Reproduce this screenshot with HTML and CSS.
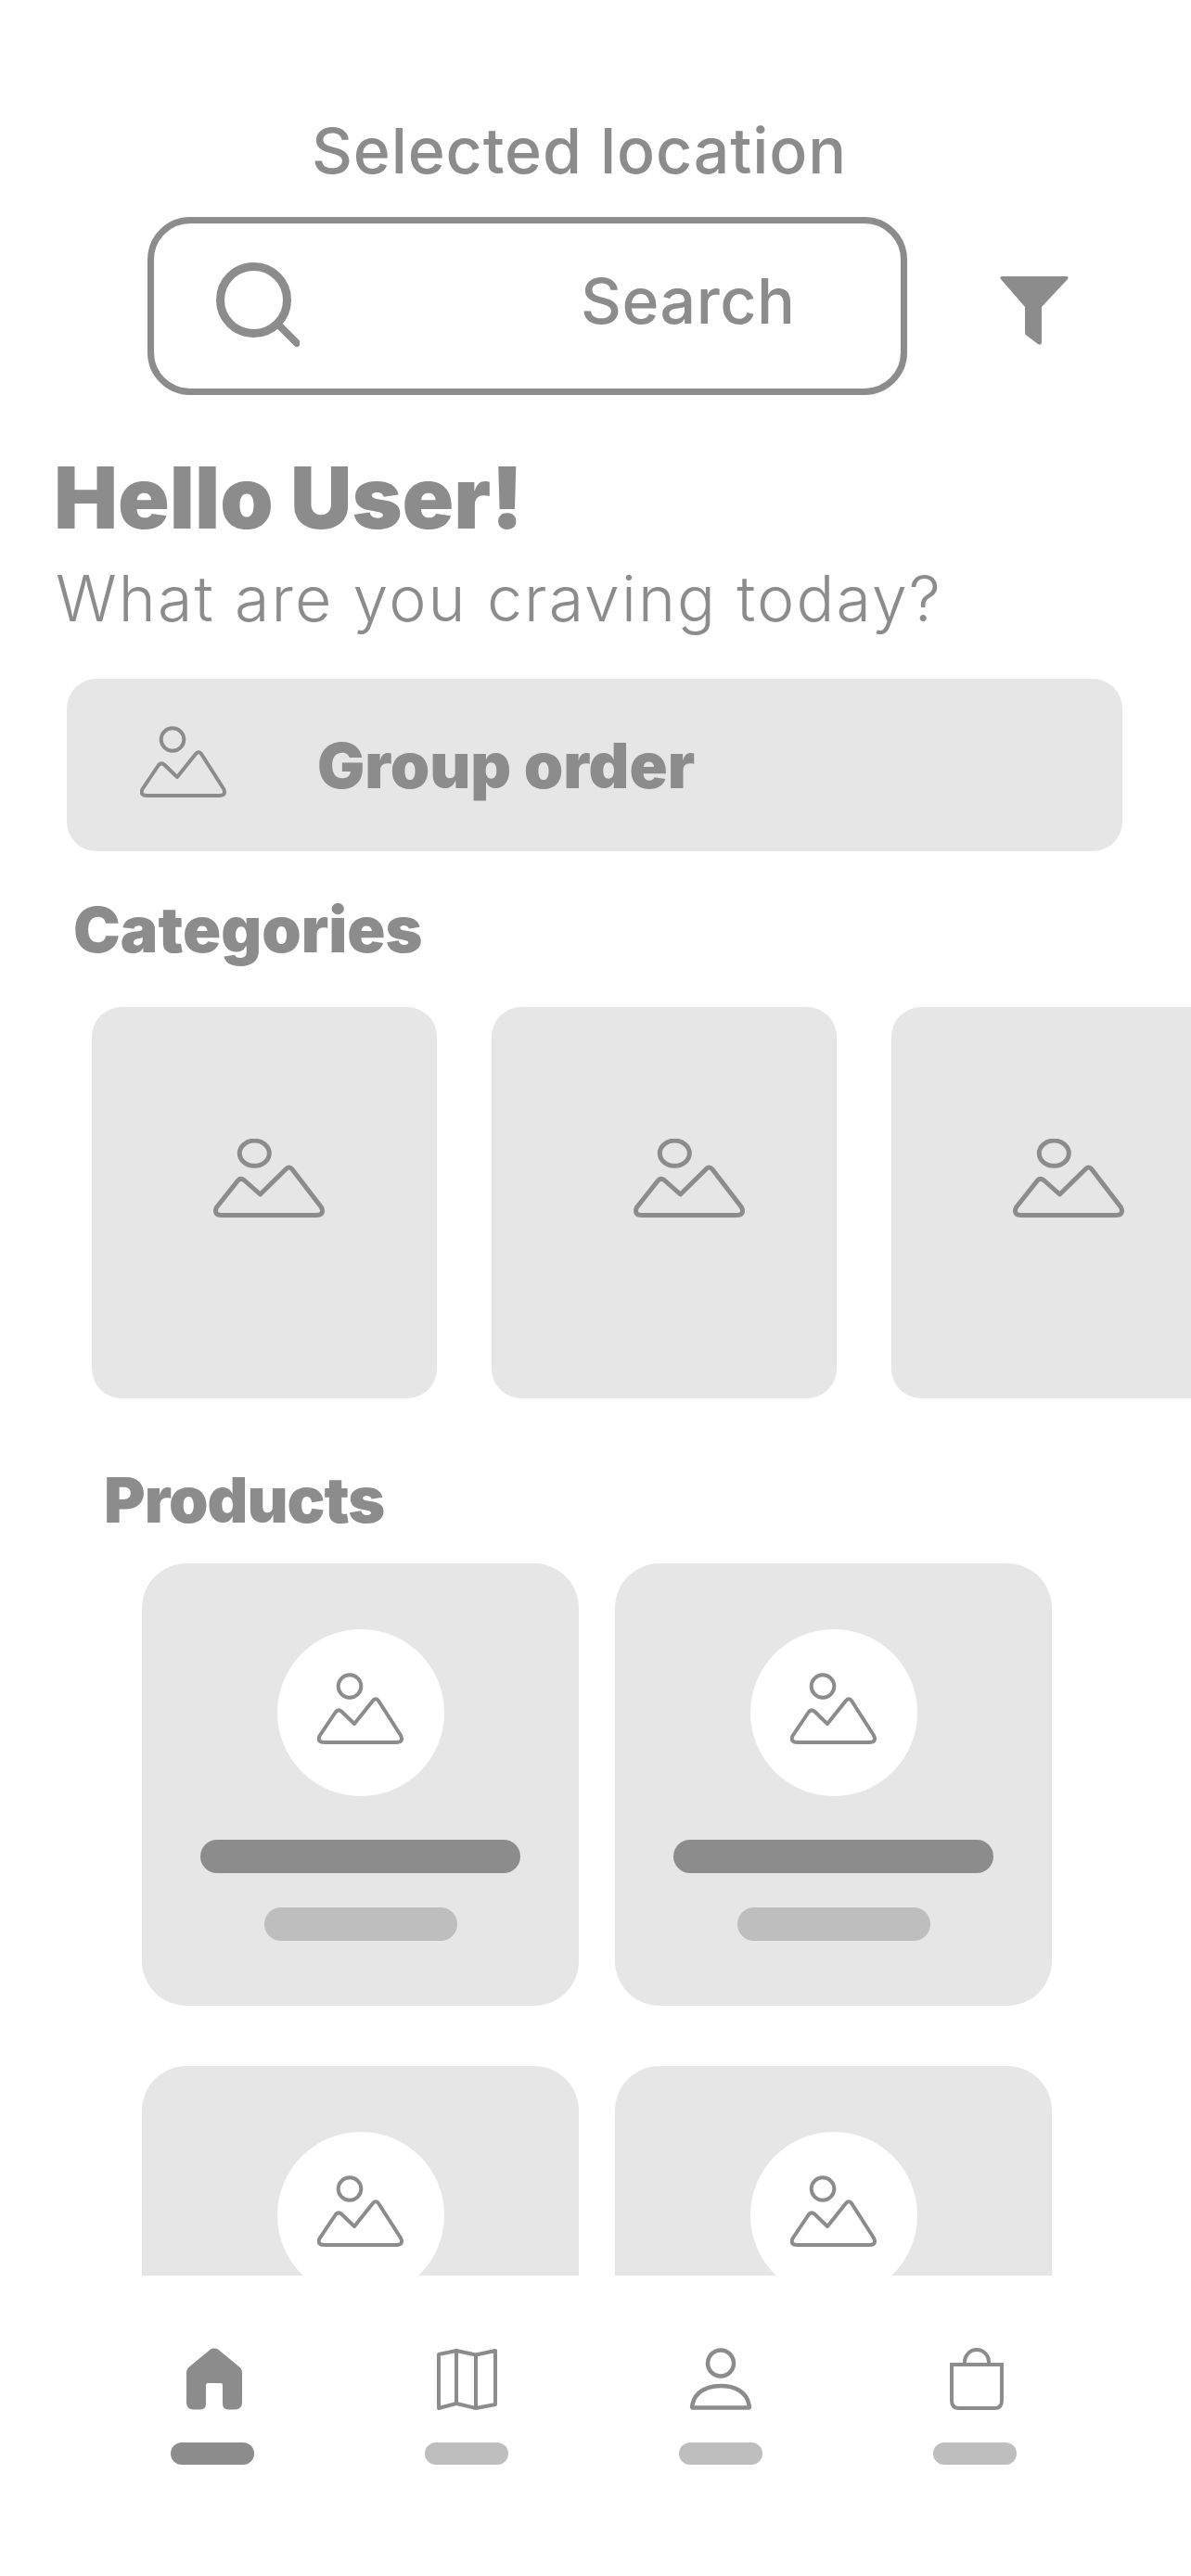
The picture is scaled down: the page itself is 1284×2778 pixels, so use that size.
FILE: index.html
```html
<!DOCTYPE html>
<html lang="en">
<head>
<meta charset="utf-8">
<title>Home</title>
<link rel="stylesheet" href="styles.css">
</head>
<body>
<svg class="defs" width="0" height="0" aria-hidden="true">
  <symbol id="img-small" viewBox="0 0 93 77">
    <circle cx="35" cy="14.5" r="12.3" fill="none" stroke="#8c8c8c" stroke-width="4"/>
    <path d="M8 75H85Q93.5 75 90 67.5L66 30Q63 26.5 60 30L40 55 26 41.5Q23 39 20 42L2.5 68Q-.5 75 8 75Z" fill="none" stroke="#8c8c8c" stroke-width="4" stroke-linejoin="round"/>
  </symbol>
  <symbol id="img-large" viewBox="0 0 120 85">
    <ellipse cx="44.3" cy="15.7" rx="16" ry="13.6" fill="none" stroke="#8c8c8c" stroke-width="5"/>
    <path d="M9 82.500H111Q120 82.500 116.500 74L85 33Q81.500 29 78 33L50.500 60 33 44.500Q29.500 42 26.500 45L3.500 74Q0 82.500 9 82.500Z" fill="none" stroke="#8c8c8c" stroke-width="5" stroke-linejoin="round"/>
  </symbol>
</svg>
<div class="page">
  <main class="content">
    <div class="location">Selected location</div>
    <div class="search-row">
      <div class="search">
        <svg class="search-icon" width="90" height="92" viewBox="0 0 90 92"><circle cx="40.500" cy="40.500" r="36" fill="none" stroke="#8c8c8c" stroke-width="9"/><path d="M67 67 87 87" fill="none" stroke="#8c8c8c" stroke-width="8" stroke-linecap="round"/></svg>
        <span class="search-text">Search</span>
      </div>
      <svg class="filter" width="76" height="76" viewBox="0 0 76 76"><path d="M4 1H72Q76 1 74 4L46 34V72Q46 76 42 74L30 65Q28 64 28 61V34L2 4Q0 1 4 1Z" fill="#8c8c8c"/></svg>
    </div>
    <h1 class="hello">Hello User!</h1>
    <p class="sub">What are you craving today?</p>
    <div class="group-card">
      <svg class="img-small" width="93" height="77"><use href="#img-small"/></svg>
      <span class="group-text">Group order</span>
    </div>
    <h2 class="cat-title">Categories</h2>
    <div class="cat-row">
      <div class="cat"><svg width="120" height="85"><use href="#img-large"/></svg></div>
      <div class="cat cat-mid"><svg width="120" height="85"><use href="#img-large"/></svg></div>
      <div class="cat"><svg width="120" height="85"><use href="#img-large"/></svg></div>
    </div>
    <h2 class="prod-title">Products</h2>
    <div class="prod-grid">
      <div class="prod">
        <div class="prod-pic"><svg width="93" height="77"><use href="#img-small"/></svg></div>
        <div class="bar-name"></div>
        <div class="bar-price"></div>
      </div>
      <div class="prod">
        <div class="prod-pic"><svg width="93" height="77"><use href="#img-small"/></svg></div>
        <div class="bar-name"></div>
        <div class="bar-price"></div>
      </div>
      <div class="prod">
        <div class="prod-pic"><svg width="93" height="77"><use href="#img-small"/></svg></div>
        <div class="bar-name"></div>
        <div class="bar-price"></div>
      </div>
      <div class="prod">
        <div class="prod-pic"><svg width="93" height="77"><use href="#img-small"/></svg></div>
        <div class="bar-name"></div>
        <div class="bar-price"></div>
      </div>
    </div>
  </main>
  <nav class="nav">
    <div class="nav-item">
      <svg width="90" height="67" viewBox="0 0 90 67"><path d="M43 1.500Q47 -.5 51 1.500L74 20.500Q77 23 77 27V59Q77 66.500 69 66.500H62Q56 66.500 56 60V40Q56 38 54 38H40Q38 38 38 40V60Q38 66.500 32 66.500H25Q17 66.500 17 59V27Q17 23 20 20.500Z" fill="#8c8c8c"/></svg>
      <div class="pill pill-on"></div>
    </div>
    <div class="nav-item">
      <svg width="90" height="67" viewBox="0 0 90 67"><path d="M15 7 34 3 55 7.500 76 3V61L55 65 34 60 15 65ZM34 3V60M55 7.500V65" fill="none" stroke="#8c8c8c" stroke-width="4" stroke-linejoin="round"/></svg>
      <div class="pill"></div>
    </div>
    <div class="nav-item">
      <svg width="90" height="67" viewBox="0 0 90 67"><circle cx="45" cy="16.500" r="14" fill="none" stroke="#8c8c8c" stroke-width="4.500"/><path d="M15 64.500Q13.500 64.500 14.500 61C17.500 47 30 41 45 41S72.500 47 75.500 61Q76.500 64.500 75 64.500Z" fill="none" stroke="#8c8c8c" stroke-width="4.500" stroke-linejoin="round"/></svg>
      <div class="pill"></div>
    </div>
    <div class="nav-item">
      <svg width="90" height="67" viewBox="0 0 90 67"><path d="M20 18H74V57Q74 65 66 65H28Q20 65 20 57ZM34 18V15A13 13 0 0 1 60 15V18" fill="none" stroke="#8c8c8c" stroke-width="4"/></svg>
      <div class="pill"></div>
    </div>
  </nav>
</div>
</body>
</html>
```

FILE: styles.css
```css
* { box-sizing: border-box; }
html, body { margin: 0; padding: 0; background: #fff; }
body { font-family: Inter, "Liberation Sans", sans-serif; color: #8c8c8c; }
.defs { position: absolute; }
.page { width: 1284px; height: 2778px; overflow: hidden; display: flex; flex-direction: column; }
.content { height: 2454px; flex: none; overflow: hidden; padding-top: 122px; }

.location { padding-left: 336px; font-size: 68px; line-height: 80px; font-weight: 500; letter-spacing: 0.9px; white-space: nowrap; }

.search-row { display: flex; align-items: center; margin: 32px 0 0 159px; }
.search { width: 819px; height: 192px; border: 7px solid #8c8c8c; border-radius: 46px; display: flex; padding: 42px 0 0 67px; }
.search-icon { flex: none; }
.search-text { margin: 1px 0 0 303px; font-size: 68px; line-height: 80px; font-weight: 500; letter-spacing: 0.5px; }
.filter { flex: none; margin: 10px 0 0 99px; }

.hello { margin: 61px 0 0 58px; font-size: 92px; line-height: 100px; font-weight: 900; }
.sub { margin: 18px 0 0 60px; font-size: 68px; line-height: 80px; font-weight: 300; letter-spacing: 2.1px; white-space: nowrap; }

.group-card { width: 1138px; height: 186px; margin: 47px 0 0 72px; background: #e6e6e6; border-radius: 32px; display: flex; align-items: center; padding-left: 79px; }
.img-small { margin-top: -7px; }
.group-text { margin-left: 98px; font-size: 68px; line-height: 80px; font-weight: 900; white-space: nowrap; }

.cat-title { margin: 44px 0 0 79px; font-size: 68px; line-height: 80px; font-weight: 900; }
.cat-row { display: flex; gap: 59px; margin-top: 44px; padding-left: 99px; overflow: hidden; }
.cat { flex: none; width: 372px; height: 422px; background: #e6e6e6; border-radius: 32px; padding: 142px 0 0 131px; }
.cat-mid { padding-left: 153px; }

.prod-title { margin: 69px 0 0 112px; font-size: 68px; line-height: 80px; font-weight: 900; letter-spacing: -1px; }
.prod-grid { display: grid; grid-template-columns: 471px 471px; column-gap: 39px; row-gap: 65px; margin: 29px 0 0 153px; }
.prod { height: 477px; background: #e6e6e6; border-radius: 48px; display: flex; flex-direction: column; align-items: center; padding-top: 71px; }
.prod-pic { width: 180px; height: 180px; border-radius: 50%; background: #fff; padding: 47px 0 0 43px; }
.bar-name { width: 345px; height: 36px; border-radius: 18px; background: #8c8c8c; margin-top: 47px; }
.bar-price { width: 208px; height: 36px; border-radius: 18px; background: #bebebe; margin-top: 37px; }

.nav { display: flex; gap: 184px; padding: 78px 0 0 184px; }
.nav-item { width: 90px; display: flex; flex-direction: column; }
.nav-item svg { display: block; }
.pill { width: 90px; height: 24px; border-radius: 12px; background: #bebebe; margin-top: 35px; }
.pill-on { background: #8c8c8c; }
```
